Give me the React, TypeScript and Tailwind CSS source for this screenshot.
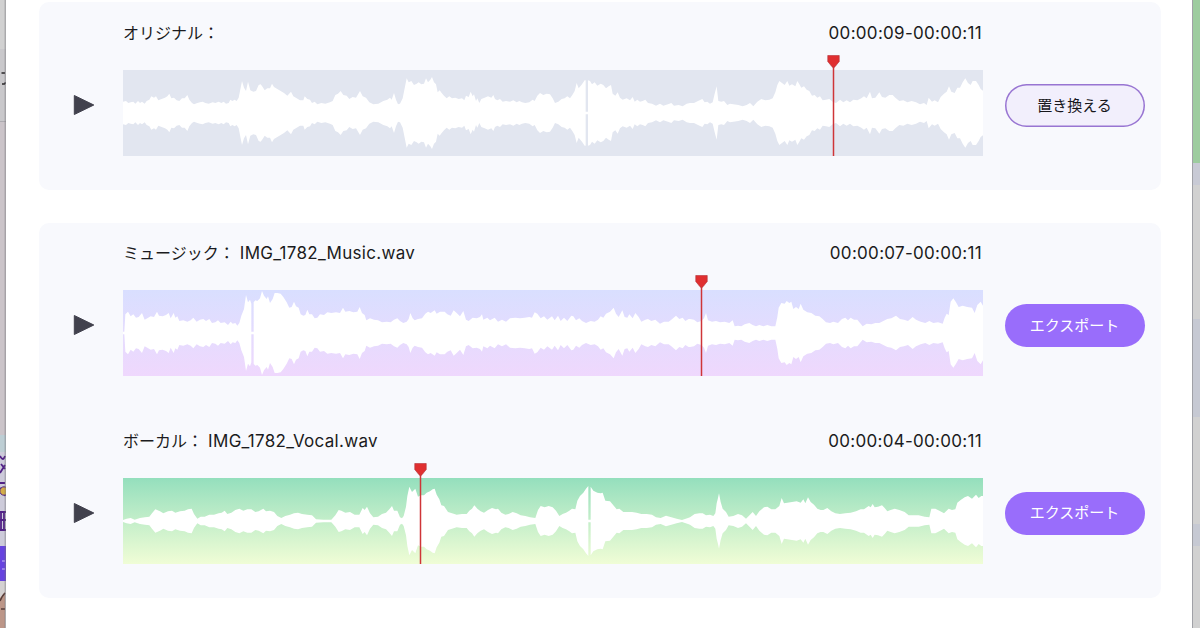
import React from "react";

type Segment = { start: number; center: number; points: string };

// Envelope samples are "x,y" pairs at three units per pixel; the lower half mirrors the upper one.
const original: Segment[] = [
  {
    start: -39,
    center: 158,
    points:
      "39,124 48,122 55,128 62,126 70,124 76,130 84,122 90,128 96,124 104,130 110,122 118,118 124,108 132,112 138,108 145,120 155,116 165,112 172,108 178,100 184,114 192,112 200,120 208,122 216,114 224,114 232,104 238,118 246,128 252,132 262,128 270,126 278,124 286,128 296,130 308,126 316,128 326,124 334,128 341,124 348,130 356,128 361,118 367,122 374,118 380,122 386,112 390,92 396,62 402,82 408,92 414,64 421,90 430,94 438,92 446,74 452,72 458,80 464,90 472,84 480,84 486,70 492,80 502,86 512,92 522,98 532,106 543,94 550,108 560,114 570,120 580,120 584,108 592,116 600,118 606,128 614,124 622,132 634,128 646,130 660,126 668,122 676,104 684,100 692,92 700,104 710,106 718,116 728,110 738,112 750,92 758,108 768,112 778,126 790,132 805,130 820,122 832,118 840,112 845,118 852,98 858,118 864,132 869,130",
  },
  {
    start: 831,
    center: 158,
    points:
      "0,130 8,114 14,84 20,54 26,66 34,62 42,74 50,70 56,66 64,72 72,70 78,54 84,66 91,58 96,50 102,66 108,72 113,96 119,90 125,98 132,106 140,114 148,108 156,114 166,112 176,116 186,114 193,120 198,106 206,110 212,94 218,108 222,102 228,122 232,114 238,128 244,116 254,112 264,108 274,112 280,104 285,116 292,120 300,116 308,124 318,122 330,124 340,120 350,126 358,122 366,126 376,128 388,126 398,118 404,122 412,106 420,98 430,104 440,100 450,102 458,114 465,128 475,124 485,116 494,114 502,108 510,114 517,104 524,92 530,68 536,84 546,72 554,60 557,60 557,154 564,154 564,60 570,62 576,72 584,66 592,76 602,70 610,74 618,84 626,78 633,74 638,100 646,106 653,96 660,112 668,118 680,114 690,120 698,110 704,124 712,118 720,124 728,122 736,118 744,128 756,130 768,136 780,130 790,136 804,132 814,128 822,136 836,134 848,138 860,130",
  },
  {
    start: 1701,
    center: 188,
    points:
      "0,158 12,158 24,152 37,146 44,156 52,154 60,160 68,156 74,130 80,108 85,152 94,154 102,152 112,164 120,160 130,162 145,164 158,168 170,164 180,158 190,168 202,154 214,146 226,150 238,148 248,144 256,126 262,104 268,92 276,98 284,104 292,92 298,106 306,102 316,108 322,92 328,102 334,112 342,108 350,118 358,122 366,136 374,134 382,142 390,138 398,150 408,148 418,146 428,154 438,158 450,148 460,156 470,150 480,156 490,148 502,150 514,144 522,138 530,144 540,124 546,144 556,142 568,126 576,140 586,142 598,134 608,134 616,142 628,152 640,150 652,156 665,152 678,156 690,162 702,158 710,164 716,142 726,154 734,150 744,156 752,140 762,130 770,124 777,108 784,124 794,128 802,112 810,112 818,96 826,84 834,98 842,104 848,92 858,92 866,104 872,116 880,122",
  },
];

const music: Segment[] = [
  {
    start: -39,
    center: 158,
    points:
      "39,154 43,154 46,102 54,94 62,108 70,102 78,112 86,110 96,98 104,118 112,114 122,108 132,110 141,94 147,106 158,108 168,104 176,98 182,114 191,98 196,112 202,108 208,122 220,120 232,124 242,120 250,112 260,124 270,118 280,116 288,122 298,116 306,128 316,126 324,120 332,128 344,126 354,134 362,124 368,130 376,128 382,136 388,128 394,106 402,86 408,44 414,66 420,58 424,70 424,154 431,154 431,66 436,60 442,62 450,54 456,32 462,46 470,56 474,48 480,68 488,56 494,38 502,38 512,40 520,50 530,66 538,82 545,80 552,64 558,78 566,82 572,102 580,106 586,104 592,88 598,102 606,102 614,114 622,112 630,102 642,104 652,96 664,98 678,96 690,98 699,82 706,94 718,92 730,96 742,94 749,80 756,98 764,104 769,120 780,114 792,118 804,120 816,126 830,124 842,126 852,118 862,114",
  },
  {
    start: 831,
    center: 158,
    points:
      "0,122 10,128 20,124 26,116 31,98 38,114 44,120 54,116 66,114 76,100 84,94 92,98 104,90 110,100 120,94 134,94 142,102 152,106 161,90 170,98 180,108 190,92 198,118 206,122 218,112 230,114 240,110 246,102 250,118 262,112 270,120 284,112 294,124 306,118 318,124 330,114 346,112 360,114 374,112 388,110 396,112 404,96 412,100 422,114 432,108 442,118 456,108 464,120 474,106 482,122 492,112 502,122 514,106 520,108 528,120 538,114 546,122 558,128 572,122 584,124 594,118 602,108 610,112 618,100 630,94 641,82 648,100 656,110 667,90 674,110 682,112 688,102 698,114 706,98 716,110 724,124 736,118 744,116 754,122 766,118 780,130 792,124 806,124 814,118 828,106 838,116 848,112 856,122 866,116",
  },
  {
    start: 1701,
    center: 188,
    points:
      "0,146 12,148 22,156 34,152 42,144 48,128 54,150 66,154 78,152 90,156 104,154 118,158 128,150 134,168 144,166 154,168 164,162 178,158 188,164 198,168 208,164 220,168 232,164 244,168 256,168 262,140 266,112 274,98 284,100 290,92 298,98 304,94 310,116 318,110 326,116 332,100 340,118 352,126 364,128 376,136 388,138 398,146 408,156 420,158 430,154 444,158 456,146 466,142 474,150 482,142 492,148 502,148 510,158 518,168 530,160 544,162 556,158 568,158 580,152 592,146 604,144 618,136 630,146 642,148 654,152 668,140 678,148 692,154 706,158 718,152 730,158 744,156 758,160 764,142 770,130 776,134 782,94 790,84 798,96 806,110 818,106 832,110 846,112 854,128 862,104 872,94 880,108",
  },
];

const vocal: Segment[] = [
  {
    start: -39,
    center: 183,
    points:
      "39,180 50,176 62,174 74,179 90,174 105,172 118,170 126,160 136,148 150,154 160,160 174,154 186,152 196,158 210,154 224,152 234,148 245,146 252,162 262,176 272,170 284,170 298,164 312,164 326,160 335,158 344,152 352,162 364,158 376,150 388,146 400,152 412,148 424,148 436,156 446,154 460,146 468,154 480,152 492,156 502,168 514,174 526,168 540,164 552,160 564,158 576,162 592,164 606,166 618,178 640,179 664,179 676,166 686,150 694,152 706,158 720,156 734,164 748,164 758,144 764,150 771,140 780,160 790,172 804,170 816,162 828,158 838,148 846,138 852,152 862,152",
  },
  {
    start: 831,
    center: 183,
    points:
      "0,172 6,175 11,168 18,140 22,108 28,80 36,96 46,86 54,110 62,106 72,106 80,98 90,94 98,88 104,86 110,104 118,118 124,136 132,138 144,156 156,160 170,164 186,162 200,162 208,152 216,146 223,136 232,146 242,154 252,158 264,150 276,144 288,148 294,146 304,158 316,164 326,162 338,156 350,160 362,166 376,168 390,172 406,174 414,150 422,138 434,142 446,138 458,142 468,152 478,168 488,162 498,158 508,152 516,146 526,148 532,122 540,108 550,98 558,86 565,78 565,179 572,179 572,80 580,92 592,98 602,100 608,98 616,122 630,124 640,136 650,148 658,146 670,156 684,156 696,156 710,158 724,162 740,162 756,164 768,172 782,174 798,167 814,172 830,176 846,180 864,174",
  },
  {
    start: 1701,
    center: 273,
    points:
      "0,262 14,252 28,250 38,250 48,256 60,254 70,258 76,250 80,220 84,204 87,190 92,216 98,236 108,246 116,260 130,258 144,252 156,256 168,266 180,254 188,246 198,258 208,244 222,232 232,230 244,238 256,238 268,228 275,204 282,220 292,218 306,216 320,214 332,218 340,208 346,220 354,202 362,216 372,224 382,236 392,240 400,240 412,234 424,244 436,250 450,252 466,250 482,248 498,244 512,238 522,238 536,228 542,232 548,222 554,232 564,230 576,226 584,234 592,244 602,240 614,236 628,240 644,246 656,256 670,256 686,256 704,260 718,262 724,236 736,236 748,242 762,250 776,236 786,240 796,238 802,218 812,210 824,202 834,198 846,206 858,194 866,204 874,198 880,198",
  },
];

function envelope(segments: Segment[]) {
  const samples = segments.flatMap(({ start, center, points }) =>
    points.split(" ").map((pair) => {
      const [x, y] = pair.split(",").map(Number);
      return [x + start, center - y];
    }),
  );
  const upper = samples.map(([x, a]) => `${x},${129 - a}`);
  const lower = samples.map(([x, a]) => `${x},${129 + a}`).reverse();
  return [...upper, ...lower].join(" ");
}

function Playhead({ at }: { at: number }) {
  return (
    <svg className="absolute -top-[15px] h-[101px] w-[13px]" style={{ left: at }} viewBox="0 0 13 101">
      <path d="M6.5 10V101" stroke="#cf3538" strokeWidth="1.5" />
      <path d="M0.8 0.4h11.4v6.1L8 11.7Q6.5 13.4 5 11.7L0.8 6.5Z" fill="#e02f30" stroke="#b9383e" strokeWidth=".7" strokeLinejoin="round" />
    </svg>
  );
}

type TrackProps = {
  label: string;
  file?: string;
  time: string;
  fill: string;
  segments: Segment[];
  playhead: number;
  action: string;
  outlined?: boolean;
};

function Track({ label, file, time, fill, segments, playhead, action, outlined }: TrackProps) {
  return (
    <div className="flex">
      <button className="mt-[83px] ml-[34px] h-[22px] w-[50px] shrink-0" aria-label="再生">
        <svg className="h-[22px] w-[22px]" viewBox="0 0 22 22">
          <path d="M1.3 1.5v19L20.8 11Z" fill="#41414d" stroke="#41414d" strokeWidth="1" strokeLinejoin="round" />
        </svg>
      </button>
      <div className="w-[860px] shrink-0">
        <div className="flex h-[47px] items-end justify-between pr-[1px] pb-[13px] leading-6 whitespace-pre">
          <span className="text-[16px]">
            {label}
            {file && <span className="text-[17px] tracking-[0.3px]"> {file}</span>}
          </span>
          <span className="text-[17px] tracking-[0.3px]">{time}</span>
        </div>
        <div className={`relative mt-[12px] h-[86px] ${fill}`}>
          <svg className="h-full w-full" viewBox="0 0 2580 258" preserveAspectRatio="none">
            <polygon points={envelope(segments)} fill="#fff" />
          </svg>
          <Playhead at={playhead} />
        </div>
      </div>
      <button
        className={`mt-[73px] ml-[21.5px] h-[43px] w-[140px] shrink-0 rounded-full pt-[1px] text-[15px] ${
          outlined ? "bg-[#f2effc] text-[#17171c] inset-ring-[1.5px] inset-ring-[#9875d2]" : "bg-[#996dfb] text-white"
        }`}
      >
        {action}
      </button>
    </div>
  );
}

function LeftBackdrop() {
  return (
    <svg className="h-full w-[6px] shrink-0" viewBox="0 0 6 628">
      <path d="M0 0h6v628H0Z" fill="#cbc4c9" />
      <path d="M0 0h6v49H0Z" fill="#d1d1d1" />
      <path d="M0 49h6v72H0Z" fill="#c9c8cb" />
      <path d="M0 121.5h6" stroke="#adabb0" />
      <path d="M1.5 73H5M2 84h2.5l1-1.5" fill="none" stroke="#282629" strokeWidth="1.4" />
      <path d="M0 435h6v17H0Z" fill="#bdced4" />
      <path d="M0 452h6v94H0Z" fill="#cdcbda" />
      <path
        d="M0 456q3 6 5 0M1 464l4 5M0 473l5-8M0 483h5M0 488q4 2 5 8M0 512h6M0 520h6M1 512v18M4 512v18M0 530h6"
        fill="none"
        stroke="#512186"
        strokeWidth="1.8"
      />
      <circle cx="4" cy="491" r="4.2" fill="#d4ad48" stroke="#512186" />
      <path d="M0 546h6v35H0Z" fill="#6643e0" />
      <path d="M2 561h3M2 569h3" stroke="#c9bdf5" />
      <path d="M0 581h6v47H0Z" fill="#d4d1d1" />
      <path d="M0 598l5-6v36H0Z" fill="#bc9688" />
      <path d="M0 601q2-5 5-8M1 609h4" fill="none" stroke="#573e3a" strokeWidth="1.6" />
      <path d="M5.2 0v628" stroke="#737277" strokeOpacity=".6" strokeWidth="1" />
    </svg>
  );
}

function RightBackdrop() {
  return (
    <div className="flex w-[8px] shrink-0 flex-col border-l border-[#a0a1a7] bg-[#d1d1d1]">
      <div className="h-[163px] shrink-0 bg-[#9dcc9f]" />
      <div className="h-[22px] shrink-0 bg-[#c8cad5]" />
      <div className="h-[134px] shrink-0" />
      <div className="h-[98px] shrink-0 bg-[#c6c9d3]" />
      <div className="h-[107px] shrink-0" />
      <div className="h-[22px] shrink-0 bg-[#c6c9d3]" />
    </div>
  );
}

export default function App() {
  return (
    <div className="flex h-[628px] w-[1200px] overflow-hidden bg-white font-['Inter','Noto_Sans_CJK_JP',sans-serif] text-[#1b1b20]">
      <LeftBackdrop />
      <main className="flex flex-1 flex-col gap-[33px] pt-[2px] pl-[33px]">
        <section className="h-[188px] w-[1122px] shrink-0 rounded-[10px] bg-[#f8f9fd] pt-[9px]">
          <Track
            label="オリジナル："
            time="00:00:09-00:00:11"
            fill="bg-[#e2e6f0]"
            segments={original}
            playhead={703.7}
            action="置き換える"
            outlined
          />
        </section>
        <section className="flex h-[375px] w-[1122px] shrink-0 flex-col gap-[42.5px] rounded-[10px] bg-[#f8f9fd] pt-[8px]">
          <Track
            label="ミュージック："
            file="IMG_1782_Music.wav"
            time="00:00:07-00:00:11"
            fill="bg-linear-to-b from-[#d9dfff] to-[#efd8fd]"
            segments={music}
            playhead={571.7}
            action="エクスポート"
          />
          <Track
            label="ボーカル："
            file="IMG_1782_Vocal.wav"
            time="00:00:04-00:00:11"
            fill="bg-linear-to-b from-[#94dfbd] to-[#f0fdd6]"
            segments={vocal}
            playhead={291}
            action="エクスポート"
          />
        </section>
      </main>
      <RightBackdrop />
    </div>
  );
}
